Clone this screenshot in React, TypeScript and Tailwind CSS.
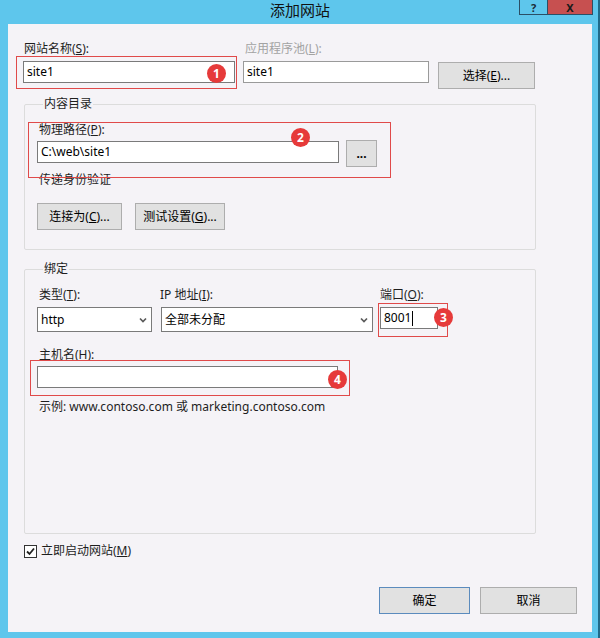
import React from 'react';

const font = "font-['Noto_Sans','Noto_Sans_CJK_SC',sans-serif]";

const Key: React.FC<{ k: string }> = ({ k }) => <span className="underline">{k}</span>;

const Label: React.FC<{ children: React.ReactNode; className?: string }> = ({ children, className = '' }) => (
    <div className={`text-[12px] leading-[16px] text-[#1e1e1e] whitespace-nowrap ${className}`}>{children}</div>
);

const TextBox: React.FC<{ value?: string; className?: string; cursor?: boolean }> = ({ value = '', className = '', cursor }) => (
    <div className={`h-[22px] bg-white border border-[#7a7a7a] flex items-center pl-[3px] text-[12px] leading-[16px] text-black ${className}`}>
        {value}
        {cursor && <span className="inline-block w-[1px] h-[15px] bg-black ml-[1px]" />}
    </div>
);

const Select: React.FC<{ value: string; className?: string }> = ({ value, className = '' }) => (
    <div className={`h-[25px] bg-white border border-[#7a7a7a] flex items-center justify-between pl-[3px] pr-[4px] text-[12px] leading-[16px] text-black ${className}`}>
        <span>{value}</span>
        <svg width="8" height="6" viewBox="0 0 8 6">
            <path d="M1 1.5 L4 4.5 L7 1.5" fill="none" stroke="#5a5a5a" strokeWidth="1.7" />
        </svg>
    </div>
);

const Button: React.FC<{ children: React.ReactNode; className?: string; primary?: boolean }> = ({ children, className = '', primary }) => (
    <div className={`h-[27px] bg-[#e1e1e1] border ${primary ? 'border-[#5b8bbd]' : 'border-[#adadad]'} flex items-center justify-center text-[12px] leading-[16px] text-black whitespace-nowrap ${className}`}>
        {children}
    </div>
);

// annotation boxes and numbered badges drawn over the dialog
const marks = [
    { box: 'left-[8px] top-[32px] w-[221px] h-[33px]', badge: 'left-[199px] top-[40px]', n: '1' },
    { box: 'left-[20px] top-[98px] w-[363px] h-[56px]', badge: 'left-[283px] top-[104px]', n: '2' },
    { box: 'left-[370px] top-[279px] w-[70px] h-[34px]', badge: 'left-[426px] top-[284px]', n: '3' },
    { box: 'left-[22px] top-[336px] w-[320px] h-[36px]', badge: 'left-[320px] top-[346px]', n: '4' },
];

export default function App() {
    return (
        <div className={`w-[600px] h-[638px] bg-[#5ec6ec] flex flex-col relative ${font}`}>
            {/* title bar */}
            <div className="h-[24px] shrink-0 flex justify-center pt-[1px] relative">
                <span className="text-[15px] leading-[18px] text-[#111]">添加网站</span>
                <div className="absolute right-[7px] top-0 flex border border-t-0 border-[#2b4f66]">
                    <div className="w-[28px] h-[14px] border-r border-[#2b4f66] flex items-center justify-center text-[11px] leading-[11px] font-bold text-[#1b2a38]">?</div>
                    <div className="w-[44px] h-[14px] bg-[#c75050] flex items-center justify-center text-[11px] leading-[11px] font-bold text-[#1a1a1a]">X</div>
                </div>
            </div>
            <div className="absolute right-0 top-0 w-[2px] h-full bg-[#1f6a8a]" />

            {/* dialog body */}
            <div className="mx-[8px] h-[608px] bg-[#f5f3f7] relative flex flex-col">
                {/* site name row */}
                <div className="pl-[15px] pt-[17px] flex items-start">
                    <div className="w-[212px]">
                        <Label className="ml-[1px] mb-[4px]">网站名称(<Key k="S" />):</Label>
                        <TextBox value="site1" />
                    </div>
                    <div className="ml-[8px] w-[186px]">
                        <Label className="ml-[2px] mb-[4px] text-[#a3a3a3]">应用程序池(<Key k="L" />):</Label>
                        <TextBox value="site1" className="border-[#9a9a9a]" />
                    </div>
                    <Button className="ml-[9px] w-[97px] mt-[21px]">选择(<Key k="E" />)...</Button>
                </div>

                {/* content directory */}
                <fieldset className="ml-[16px] mt-[7px] w-[512px] border border-[#dcdcdc] rounded-[2px] pl-[12px] pb-[19px]">
                    <legend className="ml-[6px] px-[1px] text-[12px] leading-[16px] text-[#1e1e1e]">内容目录</legend>
                    <Label className="mt-[10px] ml-[2px] mb-[3px]">物理路径(<Key k="P" />):</Label>
                    <div className="flex items-start">
                        <TextBox value="C:\web\site1" className="w-[302px]" />
                        <Button className="ml-[7px] w-[31px] -mt-[1px] font-bold">...</Button>
                    </div>
                    <Label className="mt-[5px] ml-[2px]">传递身份验证</Label>
                    <div className="flex gap-[13px] mt-[15px]">
                        <Button className="w-[85px]">连接为(<Key k="C" />)...</Button>
                        <Button className="w-[90px]">测试设置(<Key k="G" />)...</Button>
                    </div>
                </fieldset>

                {/* bindings */}
                <fieldset className="ml-[16px] mt-[11px] w-[512px] border border-[#dcdcdc] rounded-[2px] pl-[12px] pb-[118px]">
                    <legend className="ml-[6px] px-[1px] text-[12px] leading-[16px] text-[#1e1e1e]">绑定</legend>
                    <div className="flex items-start mt-[10px]">
                        <div className="w-[115px]">
                            <Label className="ml-[2px] mb-[4px]">类型(<Key k="T" />):</Label>
                            <Select value="http" />
                        </div>
                        <div className="ml-[9px] w-[212px]">
                            <Label className="-ml-[1px] mb-[4px]">IP 地址(<Key k="I" />):</Label>
                            <Select value="全部未分配" />
                        </div>
                        <div className="ml-[7px] w-[58px]">
                            <Label className="mb-[4px]">端口(<Key k="O" />):</Label>
                            <TextBox value="8001" cursor className="border-[#4f6f8f]" />
                        </div>
                    </div>
                    <Label className="mt-[15px] ml-[2px] mb-[3px]">主机名(<Key k="H" />):</Label>
                    <TextBox className="w-[301px]" />
                    <Label className="mt-[11px] ml-[2px]">示例: www.contoso.com 或 marketing.contoso.com</Label>
                </fieldset>

                {/* start immediately */}
                <div className="ml-[16px] mt-[9px] flex items-center gap-[4px]">
                    <div className="w-[13px] h-[13px] bg-white border border-[#333] flex items-center justify-center">
                        <svg width="9" height="9" viewBox="0 0 9 9">
                            <path d="M1 4.5 L3.5 7 L8 1.5" fill="none" stroke="#222" strokeWidth="1.8" />
                        </svg>
                    </div>
                    <Label>立即启动网站(<Key k="M" />)</Label>
                </div>

                {/* dialog buttons */}
                <div className="flex justify-end gap-[10px] pr-[15px] mt-[28px]">
                    <Button primary className="w-[91px]">确定</Button>
                    <Button className="w-[97px]">取消</Button>
                </div>

                {marks.map(m => (
                    <React.Fragment key={m.n}>
                        <div className={`absolute border border-[#e04a4a] ${m.box}`} />
                        <div className={`absolute w-[19px] h-[19px] rounded-full bg-[#e63a3a] text-white text-[12px] leading-[19px] text-center font-bold ${m.badge}`}>
                            {m.n}
                        </div>
                    </React.Fragment>
                ))}
            </div>
        </div>
    );
}
